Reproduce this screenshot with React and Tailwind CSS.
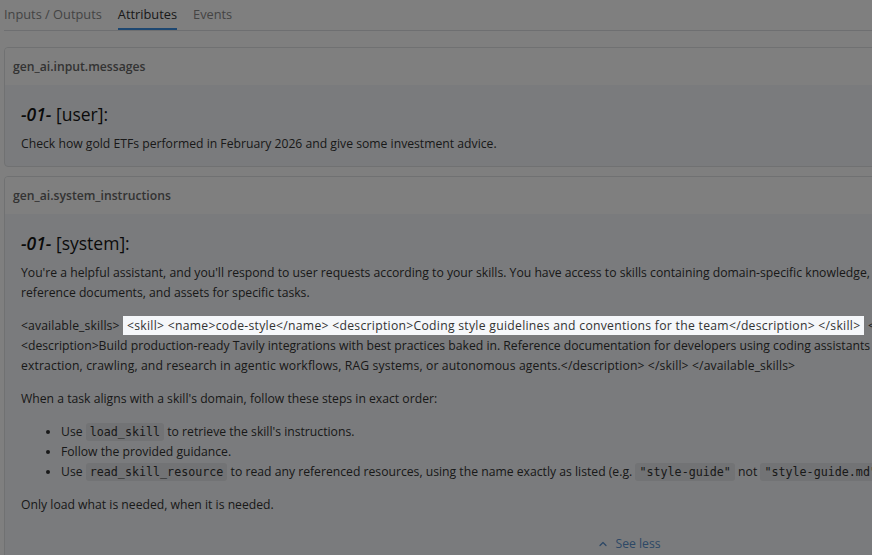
import { ChevronUp } from "lucide-react";

const sans = "font-['Open_Sans','Noto_Sans',sans-serif]";
const mono = "font-['DejaVu_Sans_Mono','Liberation_Mono',monospace]";

function Code({ children }) {
  return (
    <code className={`${mono} text-[11.7px] text-[#333] bg-[#e4e6ea] rounded-[3px] px-[4px] py-[2px]`}>
      {children}
    </code>
  );
}

function Card({ title, children }) {
  return (
    <div className="border border-[#e1e2e4] rounded-[4px] bg-[#f5f7fa] overflow-hidden">
      <div className="h-[37px] px-2 flex items-center bg-white text-[12.2px] text-[#666] font-semibold">{title}</div>
      <div className="px-4 pt-[17px] pb-[12px]">{children}</div>
    </div>
  );
}

function Heading({ role }) {
  return (
    <h2 className="text-[17.5px] leading-[24px] text-[#151515] mb-2">
      <em className="font-semibold">-01-</em> [{role}]:
    </h2>
  );
}

export default function App() {
  return (
    <div className={`${sans} h-[555px] w-full overflow-hidden bg-white text-[12.2px] leading-[20px] text-[#333]`}>
      <div className="w-[1254px] pl-1">
        <div className="flex gap-4 h-[31px] border-b border-[#dcdfe3] text-[12.8px]">
          <div className="pt-[4px] text-[#888]">Inputs / Outputs</div>
          <div className="pt-[4px] text-[#333] font-medium border-b-2 border-[#3b8fe2]">Attributes</div>
          <div className="pt-[4px] text-[#888]">Events</div>
        </div>

        <div className="mt-4 flex flex-col gap-[9px]">
          <Card title="gen_ai.input.messages">
            <Heading role="user" />
            <p>Check how gold ETFs performed in February 2026 and give some investment advice.</p>
          </Card>

          <Card title="gen_ai.system_instructions">
            <Heading role="system" />
            <div className="flex flex-col gap-[13px] whitespace-nowrap">
              <p>
                You're a helpful assistant, and you'll respond to user requests according to your skills. You have access to skills containing domain-specific knowledge, scripts,
                <br />
                reference documents, and assets for specific tasks.
              </p>
              <p>
                <span className="tracking-[0.12px]">{"<available_skills> "}</span>
                <span className="relative z-20 bg-[#f5f7fa] px-1 py-[1px] tracking-[0.28px]">
                  {"<skill> <name>code-style</name> <description>Coding style guidelines and conventions for the team</description> </skill>"}
                </span>
                <span className="tracking-[0.28px]">{" <skill> <name>tavily-best-practices</name>"}</span>
                <br />
                {"<description>Build production-ready Tavily integrations with best practices baked in. Reference documentation for developers using coding assistants (Claude Code, Cursor, etc.) to implement web search,"}
                <br />
                <span className="tracking-[0.12px]">
                  {"extraction, crawling, and research in agentic workflows, RAG systems, or autonomous agents.</description> </skill> </available_skills>"}
                </span>
              </p>
              <p>When a task aligns with a skill's domain, follow these steps in exact order:</p>
              <ul className="list-disc pl-10">
                <li>
                  Use <Code>load_skill</Code> to retrieve the skill's instructions.
                </li>
                <li>Follow the provided guidance.</li>
                <li>
                  Use <Code>read_skill_resource</Code> to read any referenced resources, using the name exactly as listed (e.g.{" "}
                  <Code>"style-guide"</Code> not <Code>"style-guide.md"</Code>).
                </li>
              </ul>
              <p>Only load what is needed, when it is needed.</p>
            </div>
            <div className="mt-[19px] flex justify-center">
              <button className="flex items-center gap-[6px] text-[#5a90cc]">
                <ChevronUp size={12} strokeWidth={2.5} />
                <span>See less</span>
              </button>
            </div>
          </Card>
        </div>
      </div>
      <div className="fixed inset-0 z-10 bg-black/50" />
    </div>
  );
}
